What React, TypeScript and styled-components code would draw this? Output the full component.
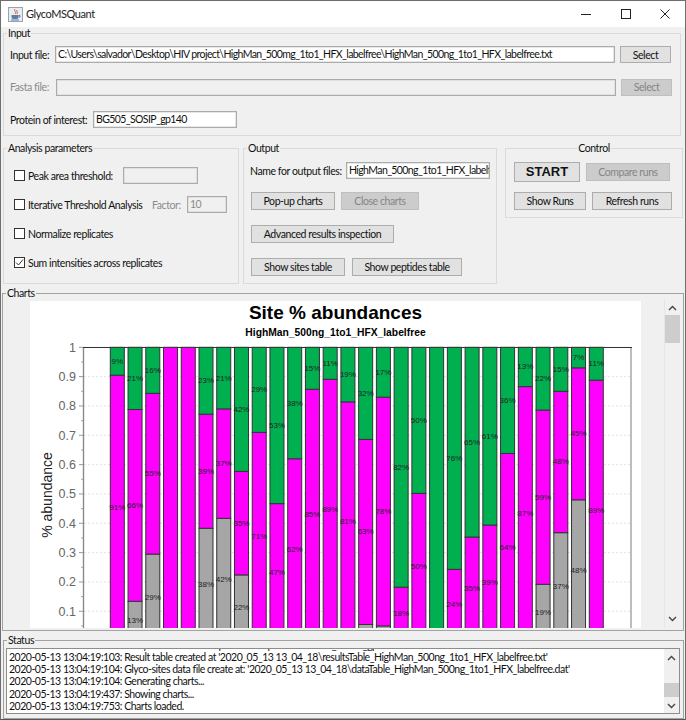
import React from "react";
import styled, { createGlobalStyle } from "styled-components";

const Global = createGlobalStyle`
  html, body { margin: 0; padding: 0; background: #f0f0f0; }
  * { box-sizing: border-box; }
`;

const UI_FONT = `Lato, "Liberation Sans", sans-serif`;
const CHART_FONT = `"Liberation Sans", Arial, sans-serif`;

const Win = styled.div`
  width: 686px; height: 720px; overflow: hidden;
  display: flex; flex-direction: column;
  background: #f0f0f0; color: #111;
  font: 10.5px/12px ${UI_FONT};
  letter-spacing: -0.42px;
  border: 1px solid #6e6e6e;
  border-bottom-color: #555;
`;
const TitleBar = styled.div`
  height: 26px; flex: none; background: #fff;
  display: flex; align-items: center; padding-left: 7px;
`;
const AppTitle = styled.span`
  font-size: 11px; margin-left: 3px; color: #222; flex: 1;
`;
const WinBtn = styled.span<{ $w: number }>`
  width: ${p => p.$w}px; height: 26px; display: flex; align-items: center; justify-content: center;
  color: #333;
`;
const Group = styled.fieldset<{ $x?: number; $w: number; $h: number; $dark?: boolean }>`
  margin: 0 0 0 ${p => p.$x ?? 2}px; padding: 0; min-width: 0; flex: none;
  width: ${p => p.$w}px; height: ${p => p.$h}px;
  border: 1px solid ${p => (p.$dark ? "#a2a2a2" : "#dadada")};
`;
const Legend = styled.legend<{ $center?: boolean }>`
  padding: 0 1px; margin: ${p => (p.$center ? "0 auto" : "0 0 0 3px")};
  line-height: 12px; color: #111;
`;
const InputBody = styled.div`
  padding: 7px 8px 0 6px; display: flex; flex-direction: column; gap: 15.5px;
`;
const Row = styled.div<{ $pr?: number }>`
  display: flex; align-items: center; height: 17px; padding-right: ${p => p.$pr ?? 0}px;
`;
const Label = styled.span<{ $w?: number; $off?: boolean }>`
  flex: none; white-space: nowrap; width: ${p => (p.$w ? `${p.$w}px` : "auto")};
  color: ${p => (p.$off ? "#8a8a8a" : "#111")};
`;
const Field = styled.div<{ $w?: number; $off?: boolean }>`
  height: 17px; flex: ${p => (p.$w ? "none" : "1")}; min-width: 0;
  width: ${p => (p.$w ? `${p.$w}px` : "auto")};
  background: ${p => (p.$off ? "#f0f0f0" : "#fff")};
  border: 1px solid #ababab;
  box-shadow: inset 0 0 0 0.5px #d0d0d0;
  padding: 0 2px; line-height: 15px; overflow: hidden; white-space: nowrap;
  letter-spacing: -0.6px;
  color: ${p => (p.$off ? "#8a8a8a" : "#111")};
`;
const Btn = styled.div<{ $w: number; $h?: number; $off?: boolean; $big?: boolean; $ml?: number }>`
  flex: none; width: ${p => p.$w}px; height: ${p => p.$h ?? 18}px;
  margin-left: ${p => p.$ml ?? 0}px;
  display: flex; align-items: center; justify-content: center;
  background: ${p => (p.$off ? "#cccccc" : "#e1e1e1")};
  border: 1px solid ${p => (p.$off ? "#bfbfbf" : "#adadad")};
  color: ${p => (p.$off ? "#858585" : "#111")};
  white-space: nowrap;
  ${p => p.$big && `font: bold 13px/16px "Liberation Sans", sans-serif; letter-spacing: 0;`}
`;
const Columns = styled.div`
  display: flex; align-items: flex-start; margin-top: 6px; height: 142px;
`;
const ParamGrid = styled.div`
  display: grid; grid-auto-rows: 17px; row-gap: 12px; padding: 13px 0 0 10px;
`;
const Check = styled.span`
  flex: none; width: 11px; height: 11px; margin-right: 3px;
  border: 1px solid #333; background: #fff;
  display: flex; align-items: center; justify-content: center;
`;
const OutputBody = styled.div`
  padding: 8px 0 0 6px; display: flex; flex-direction: column; gap: 15px;
`;
const NameRow = styled(Row)`
  margin-bottom: -2px;
`;
const BtnRow = styled.div<{ $gap: number; $mt?: number }>`
  display: flex; gap: ${p => p.$gap}px; align-items: center; margin-top: ${p => p.$mt ?? 0}px;
`;
const ControlBody = styled.div`
  padding: 8px 0 0 8px;
`;
const ChartsRow = styled.div`
  display: flex; height: 329px; padding-right: 3px; margin-top: 0;
`;
const Viewport = styled.div`
  flex: 1; min-width: 0; padding: 2px 0 0 27px; overflow: hidden;
  border-right: 1px solid #e6e6e6;
`;
const ChartSvg = styled.svg`
  display: block; background: #fff; letter-spacing: 0;
`;
const ScrollTrack = styled.div<{ $w: number }>`
  flex: none; width: ${p => p.$w}px; height: 100%;
  display: flex; flex-direction: column; align-items: center;
  background: #f0f0f0;
`;
const Thumb = styled.div<{ $top: number; $h: number }>`
  width: 100%; height: ${p => p.$h}px; margin-top: ${p => p.$top}px; background: #cdcdcd;
`;
const Arrow = styled.svg<{ $top?: number }>`
  flex: none; display: block;
  margin-top: ${p => p.$top ?? 0}px;
`;
const Spring = styled.div<{ $fixed?: number }>`
  flex: ${p => (p.$fixed ? "none" : "1")};
  height: ${p => (p.$fixed ? `${p.$fixed}px` : "auto")};
`;
const StatusBody = styled.div`
  padding: 2px 3px 0 2px;
`;
const LogBox = styled.div`
  display: flex; height: 66px; border: 1px solid #8d8d8d; background: #fff;
`;
const LogText = styled.div`
  flex: 1; min-width: 0; overflow: hidden; display: flex; flex-direction: column;
  justify-content: flex-end; padding: 0 0 1px 2px;
  letter-spacing: -0.48px;
`;
const LogLine = styled.div`
  flex: none; height: 12.2px; line-height: 12.2px; white-space: nowrap;
`;
const ChartsGroup = styled(Group)`
  margin-top: 3px;
`;

type Bar = { g: number; m: number; gl?: string; ml?: string; tl?: string };
const bars: Bar[] = [
  { g: 0, m: 0.905, ml: "91%", tl: "9%" },
  { g: 0.134, m: 0.788, gl: "13%", ml: "66%", tl: "21%" },
  { g: 0.295, m: 0.843, gl: "29%", ml: "55%", tl: "16%" },
  { g: 0, m: 1 },
  { g: 0, m: 1 },
  { g: 0.383, m: 0.772, gl: "38%", ml: "39%", tl: "23%" },
  { g: 0.417, m: 0.79, gl: "42%", ml: "37%", tl: "21%" },
  { g: 0.224, m: 0.577, gl: "22%", ml: "35%", tl: "42%" },
  { g: 0, m: 0.71, ml: "71%", tl: "29%" },
  { g: 0, m: 0.467, ml: "47%", tl: "53%" },
  { g: 0, m: 0.62, ml: "62%", tl: "38%" },
  { g: 0, m: 0.857, ml: "85%", tl: "15%" },
  { g: 0, m: 0.891, ml: "89%", tl: "11%" },
  { g: 0, m: 0.814, ml: "81%", tl: "19%" },
  { g: 0.055, m: 0.686, ml: "63%", tl: "32%" },
  { g: 0.05, m: 0.83, ml: "78%", tl: "17%" },
  { g: 0, m: 0.182, ml: "18%", tl: "82%" },
  { g: 0, m: 0.502, ml: "50%", tl: "50%" },
  { g: 0, m: 0 },
  { g: 0, m: 0.243, ml: "24%", tl: "76%" },
  { g: 0, m: 0.353, ml: "35%", tl: "65%" },
  { g: 0, m: 0.394, ml: "39%", tl: "61%" },
  { g: 0, m: 0.638, ml: "64%", tl: "36%" },
  { g: 0, m: 0.866, ml: "87%", tl: "13%" },
  { g: 0.192, m: 0.786, gl: "19%", ml: "59%", tl: "22%" },
  { g: 0.368, m: 0.85, gl: "37%", ml: "48%", tl: "15%" },
  { g: 0.48, m: 0.93, gl: "48%", ml: "45%", tl: "7%" },
  { g: 0, m: 0.888, ml: "89%", tl: "11%" },
];

const Y0 = 640.6;
const SCALE = 293.3;
const yOf = (v: number) => Y0 - v * SCALE;
const GREEN = "#00b050";
const MAGENTA = "#ff00ff";
const GREY = "#a6a6a6";

const Segment: React.FC<{ x: number; lo: number; hi: number; fill: string; label?: string }> = ({ x, lo, hi, fill, label }) => {
  if (hi <= lo) return null;
  const top = yOf(hi);
  const bottom = yOf(lo);
  return (
    <g>
      <rect x={x} y={top} width={14} height={bottom - top} fill={fill} stroke="#333" strokeWidth={1} />
      {label && (
        <text x={x + 7} y={(top + bottom) / 2 + 2.5} textAnchor="middle" fontSize={8} fontFamily={CHART_FONT} fill="#222">
          {label}
        </text>
      )}
    </g>
  );
};

const Chart: React.FC = () => {
  const majors = [1, 0.9, 0.8, 0.7, 0.6, 0.5, 0.4, 0.3, 0.2, 0.1];
  const minors = [0.95, 0.85, 0.75, 0.65, 0.55, 0.45, 0.35, 0.25, 0.15, 0.05];
  return (
    <ChartSvg width={611} height={327} viewBox="30 301 611 327">
      <text x={335.5} y={319} textAnchor="middle" fontSize={19} fontWeight="bold" fontFamily={CHART_FONT} fill="#000">Site % abundances</text>
      <text x={335.5} y={335.5} textAnchor="middle" fontSize={10.3} fontWeight="bold" fontFamily={CHART_FONT} fill="#000">HighMan_500ng_1to1_HFX_labelfree</text>
      <text transform="translate(52 495) rotate(-90)" textAnchor="middle" fontSize={14} fontFamily={CHART_FONT} fill="#222">% abundance</text>
      {majors.map(v => (
        <g key={v}>
          <line x1={84} x2={631} y1={yOf(v)} y2={yOf(v)} stroke="#e2e2e2" strokeDasharray="2 2" />
          <line x1={79} x2={83} y1={yOf(v)} y2={yOf(v)} stroke="#999" />
          <text x={76} y={yOf(v) + 4.5} textAnchor="end" fontSize={12.5} fontFamily={CHART_FONT} fill="#666">{v}</text>
        </g>
      ))}
      {minors.map(v => (
        <line key={v} x1={81} x2={83} y1={yOf(v)} y2={yOf(v)} stroke="#aaa" />
      ))}
      <line x1={83.5} x2={83.5} y1={347} y2={628} stroke="#8a8a8a" strokeWidth={1.4} />
      <line x1={631} x2={631} y1={347} y2={628} stroke="#bdbdbd" strokeWidth={2} />
      <line x1={83} x2={632} y1={347.5} y2={347.5} stroke="#333" />
      {bars.map((b, i) => {
        const x = 110.3 + i * 17.74;
        return (
          <g key={i}>
            <Segment x={x} lo={0} hi={b.g} fill={GREY} label={b.gl} />
            <Segment x={x} lo={b.g} hi={b.m} fill={MAGENTA} label={b.ml} />
            <Segment x={x} lo={b.m} hi={1} fill={GREEN} label={b.tl} />
          </g>
        );
      })}
    </ChartSvg>
  );
};

const Up = ({ top }: { top: number }) => (
  <Arrow $top={top} width="9" height="6" viewBox="0 0 9 6">
    <path d="M1 5 L4.5 1.5 L8 5" fill="none" stroke="#444" strokeWidth="1.4" />
  </Arrow>
);
const Down = () => (
  <Arrow width="9" height="6" viewBox="0 0 9 6">
    <path d="M1 1 L4.5 4.5 L8 1" fill="none" stroke="#444" strokeWidth="1.4" />
  </Arrow>
);
const Tick = () => (
  <svg width="9" height="9" viewBox="0 0 9 9">
    <path d="M1 4.5 L3.5 7 L8 1.5" fill="none" stroke="#333" strokeWidth="1" />
  </svg>
);
const JavaIcon = () => (
  <svg width="15" height="15" viewBox="0 0 15 15">
    <rect x="0.5" y="0.5" width="14" height="14" fill="#e9edf2" stroke="#9aa3ad" />
    <path d="M7 2 C5.5 4 9 5 7 7 M9 3 C8 4.5 10 5 9 7" fill="none" stroke="#d9622b" strokeWidth="1" />
    <path d="M3.5 8 H10.5 V10 C10.5 11.5 9.5 12 8.5 12 H5.5 C4.5 12 3.5 11.5 3.5 10 Z" fill="#5b7fa6" />
    <path d="M10.5 8.5 H12 V10 H10.5" fill="none" stroke="#5b7fa6" />
    <path d="M3 13 H11" stroke="#5b7fa6" />
  </svg>
);

const log = [
  "2020-05-13 13:04:19:103: Analysis resulted in 28 positions in protein: BG505_SOSIP_gp140",
  "2020-05-13 13:04:19:103: Result table created at '2020_05_13 13_04_18\\resultsTable_HighMan_500ng_1to1_HFX_labelfree.txt'",
  "2020-05-13 13:04:19:104: Glyco-sites data file create at: '2020_05_13 13_04_18\\dataTable_HighMan_500ng_1to1_HFX_labelfree.dat'",
  "2020-05-13 13:04:19:104: Generating charts...",
  "2020-05-13 13:04:19:437: Showing charts...",
  "2020-05-13 13:04:19:753: Charts loaded.",
];

export default function App() {
  return (
    <Win>
      <Global />
      <TitleBar>
        <JavaIcon />
        <AppTitle>GlycoMSQuant</AppTitle>
        <WinBtn $w={40}>
          <svg width="10" height="10" viewBox="0 0 10 10"><path d="M0 5.5 H10" stroke="#222" /></svg>
        </WinBtn>
        <WinBtn $w={39}>
          <svg width="10" height="10" viewBox="0 0 10 10"><rect x="0.5" y="0.5" width="9" height="9" fill="none" stroke="#222" /></svg>
        </WinBtn>
        <WinBtn $w={40}>
          <svg width="10" height="10" viewBox="0 0 10 10"><path d="M0.5 0.5 L9.5 9.5 M9.5 0.5 L0.5 9.5" stroke="#222" /></svg>
        </WinBtn>
      </TitleBar>

      <Group $w={678} $h={109}>
        <Legend>Input</Legend>
        <InputBody>
          <Row $pr={1}>
            <Label $w={45}>Input file:</Label>
            <Field>C:\Users\salvador\Desktop\HIV project\HighMan_500mg_1to1_HFX_labelfree\HighMan_500ng_1to1_HFX_labelfree.txt</Field>
            <Btn $w={51} $h={17} $ml={5}>Select</Btn>
          </Row>
          <Row>
            <Label $w={46} $off>Fasta file:</Label>
            <Field $off />
            <Btn $w={51} $h={17} $ml={5} $off>Select</Btn>
          </Row>
          <Row>
            <Label $w={83}>Protein of interest:</Label>
            <Field $w={144}>BG505_SOSIP_gp140</Field>
          </Row>
        </InputBody>
      </Group>

      <Columns>
        <Group $w={236} $h={142}>
          <Legend>Analysis parameters</Legend>
          <ParamGrid>
            <Row>
              <Check />
              <Label $w={95}>Peak area threshold:</Label>
              <Field $w={75} $off />
            </Row>
            <Row>
              <Check />
              <Label $w={124}>Iterative Threshold Analysis</Label>
              <Label $w={35} $off>Factor:</Label>
              <Field $w={40} $off>10</Field>
            </Row>
            <Row>
              <Check />
              <Label>Normalize replicates</Label>
            </Row>
            <Row>
              <Check><Tick /></Check>
              <Label>Sum intensities across replicates</Label>
            </Row>
          </ParamGrid>
        </Group>
        <Group $x={4} $w={254} $h={142}>
          <Legend>Output</Legend>
          <OutputBody>
            <NameRow>
              <Label $w={96}>Name for output files:</Label>
              <Field $w={144}>HighMan_500ng_1to1_HFX_labelfree</Field>
            </NameRow>
            <BtnRow $gap={6}>
              <Btn $w={84} $ml={1}>Pop-up charts</Btn>
              <Btn $w={78} $off>Close charts</Btn>
            </BtnRow>
            <BtnRow $gap={0}>
              <Btn $w={143} $ml={1}>Advanced results inspection</Btn>
            </BtnRow>
            <BtnRow $gap={7}>
              <Btn $w={94} $ml={1}>Show sites table</Btn>
              <Btn $w={110}>Show peptides table</Btn>
            </BtnRow>
          </OutputBody>
        </Group>
        <Group $x={8} $w={178} $h={76}>
          <Legend $center>Control</Legend>
          <ControlBody>
            <BtnRow $gap={6}>
              <Btn $w={66} $h={20} $big>START</Btn>
              <Btn $w={84} $off>Compare runs</Btn>
            </BtnRow>
            <BtnRow $gap={6} $mt={10}>
              <Btn $w={72}>Show Runs</Btn>
              <Btn $w={80}>Refresh runs</Btn>
            </BtnRow>
          </ControlBody>
        </Group>
      </Columns>

      <ChartsGroup $x={1} $w={682} $h={344} $dark>
        <Legend>Charts</Legend>
        <ChartsRow>
          <Viewport><Chart /></Viewport>
          <ScrollTrack $w={15}>
            <Up top={6} />
            <Thumb $top={4} $h={28} />
            <Spring />
            <Down />
            <Spring $fixed={6} />
          </ScrollTrack>
        </ChartsRow>
      </ChartsGroup>

      <ChartsGroup $x={2} $w={681} $h={85} $dark>
        <Legend>Status</Legend>
        <StatusBody>
          <LogBox>
            <LogText>
              {log.map(l => <LogLine key={l}>{l}</LogLine>)}
            </LogText>
            <ScrollTrack $w={15}>
              <Up top={6} />
              <Thumb $top={22} $h={14} />
              <Spring />
              <Down />
              <Spring $fixed={4} />
            </ScrollTrack>
          </LogBox>
        </StatusBody>
      </ChartsGroup>
    </Win>
  );
}
